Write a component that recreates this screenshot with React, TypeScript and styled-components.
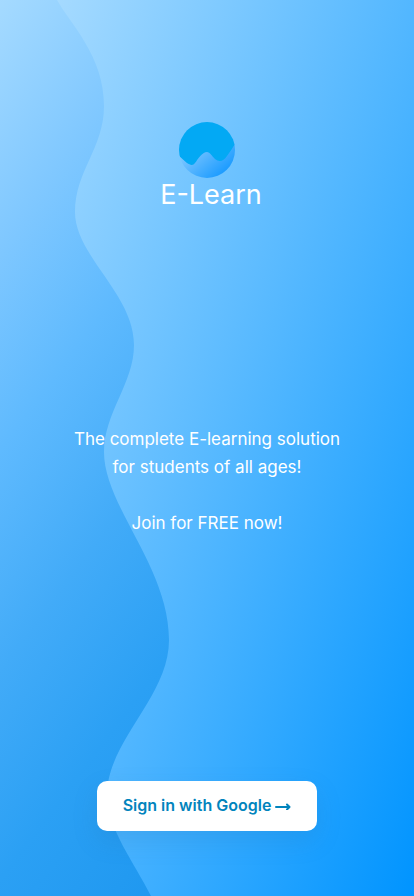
import React from "react";
import styled, { createGlobalStyle } from "styled-components";

const GlobalStyle = createGlobalStyle`
  *, *::before, *::after { box-sizing: border-box; }
  body {
    margin: 0;
    font-family: Inter, "Open Sans", sans-serif;
    color: #fff;
  }
`;

const Page = styled.main`
  position: relative;
  isolation: isolate;
  min-height: 100vh;
  display: flex;
  flex-direction: column;
  align-items: center;
  justify-content: space-between;
  padding: 122px 24px 65px;
  background: #52b5ff;
`;

const Backdrop = styled.svg`
  position: absolute;
  inset: 0;
  z-index: -1;
  width: 100%;
  height: 100%;
`;

const Brand = styled.header`
  display: flex;
  flex-direction: column;
  align-items: center;
`;

const LogoMark = styled.svg`
  display: block;
  width: 56px;
  height: 56px;
`;

const BrandName = styled.h1`
  margin: 0;
  padding-left: 8px;
  font-size: 27px;
  line-height: 34px;
  font-weight: 400;
`;

const Pitch = styled.section`
  display: flex;
  flex-direction: column;
  gap: 28px;
  max-width: 288px;
  margin-bottom: 32px;
  text-align: center;
`;

const PitchText = styled.p`
  margin: 0;
  font-size: 17px;
  line-height: 28px;
`;

const SignInButton = styled.button`
  display: flex;
  align-items: center;
  justify-content: center;
  gap: 4px;
  width: 220px;
  height: 50px;
  padding: 0 0 2px;
  border: 0;
  border-radius: 10px;
  background: #fff;
  color: #0284bd;
  font: inherit;
  font-size: 16px;
  line-height: 24px;
  font-weight: 600;
  white-space: nowrap;
  cursor: pointer;
  box-shadow: 0 10px 24px rgba(40, 120, 180, 0.2);
`;

const Arrow = styled.svg`
  display: block;
  flex: none;
  width: 16px;
  height: 10px;
`;

function Wave() {
  return (
    <Backdrop viewBox="0 0 414 896" preserveAspectRatio="none" aria-hidden="true">
      <defs>
        <linearGradient id="sky" x1="0" y1="0" x2="1" y2="1">
          <stop offset="0" stopColor="#a5daff" />
          <stop offset="1" stopColor="#0094ff" />
        </linearGradient>
        <linearGradient id="wave" gradientUnits="userSpaceOnUse" x1="0" y1="0" x2="528" y2="396">
          <stop offset="0" stopColor="#a5daff" />
          <stop offset="0.22" stopColor="#80c8ff" />
          <stop offset="0.41" stopColor="#5fbafe" />
          <stop offset="0.61" stopColor="#42abf8" />
          <stop offset="0.8" stopColor="#2ba0f4" />
          <stop offset="1" stopColor="#1f98f0" />
        </linearGradient>
      </defs>
      <path fill="url(#sky)" d="M57 0H414V896H57Z" />
      <path
        fill="url(#wave)"
        d="M0 0H57C71 25 104 56 104 106C104 148 75 171 75 212C75 256 134 294 134 345C134 383 104 413 104 452C104 506 169 567 169 640C169 697 107 741 107 795C107 828 134 862 151 896H0Z"
      />
    </Backdrop>
  );
}

function Logo() {
  return (
    <LogoMark viewBox="0 0 56 56" aria-hidden="true">
      <defs>
        <linearGradient id="mark" x1="0.15" y1="0.3" x2="0.75" y2="1">
          <stop offset="0.2" stopColor="#7cc6ff" />
          <stop offset="1" stopColor="#1699ff" />
        </linearGradient>
        <clipPath id="disc">
          <circle cx="28" cy="28" r="28" />
        </clipPath>
      </defs>
      <g clipPath="url(#disc)">
        <path fill="url(#mark)" d="M0 0H56V56H0Z" />
        <path
          fill="#03a9f4"
          d="M0 0H56V22C54 25 51 30 48 34C44 40 40 40 36 37C33 34 31 30 28 30C23 30 19 37 16 41C14 44 11 43 8 41C5 39 3 36 0 34Z"
        />
      </g>
    </LogoMark>
  );
}

export default function App() {
  return (
    <>
      <GlobalStyle />
      <Page>
        <Wave />
        <Brand>
          <Logo />
          <BrandName>E-Learn</BrandName>
        </Brand>
        <Pitch>
          <PitchText>
            The complete E-learning solution
            <br />
            for students of all ages!
          </PitchText>
          <PitchText>Join for FREE now!</PitchText>
        </Pitch>
        <SignInButton type="button">
          Sign in with Google
          <Arrow viewBox="0 0 16 10" fill="none" aria-hidden="true">
            <path
              d="M1 7H14M12 4.5L14.5 7L12 9.5"
              stroke="currentColor"
              strokeWidth="2"
              strokeLinecap="round"
              strokeLinejoin="round"
            />
          </Arrow>
        </SignInButton>
      </Page>
    </>
  );
}
